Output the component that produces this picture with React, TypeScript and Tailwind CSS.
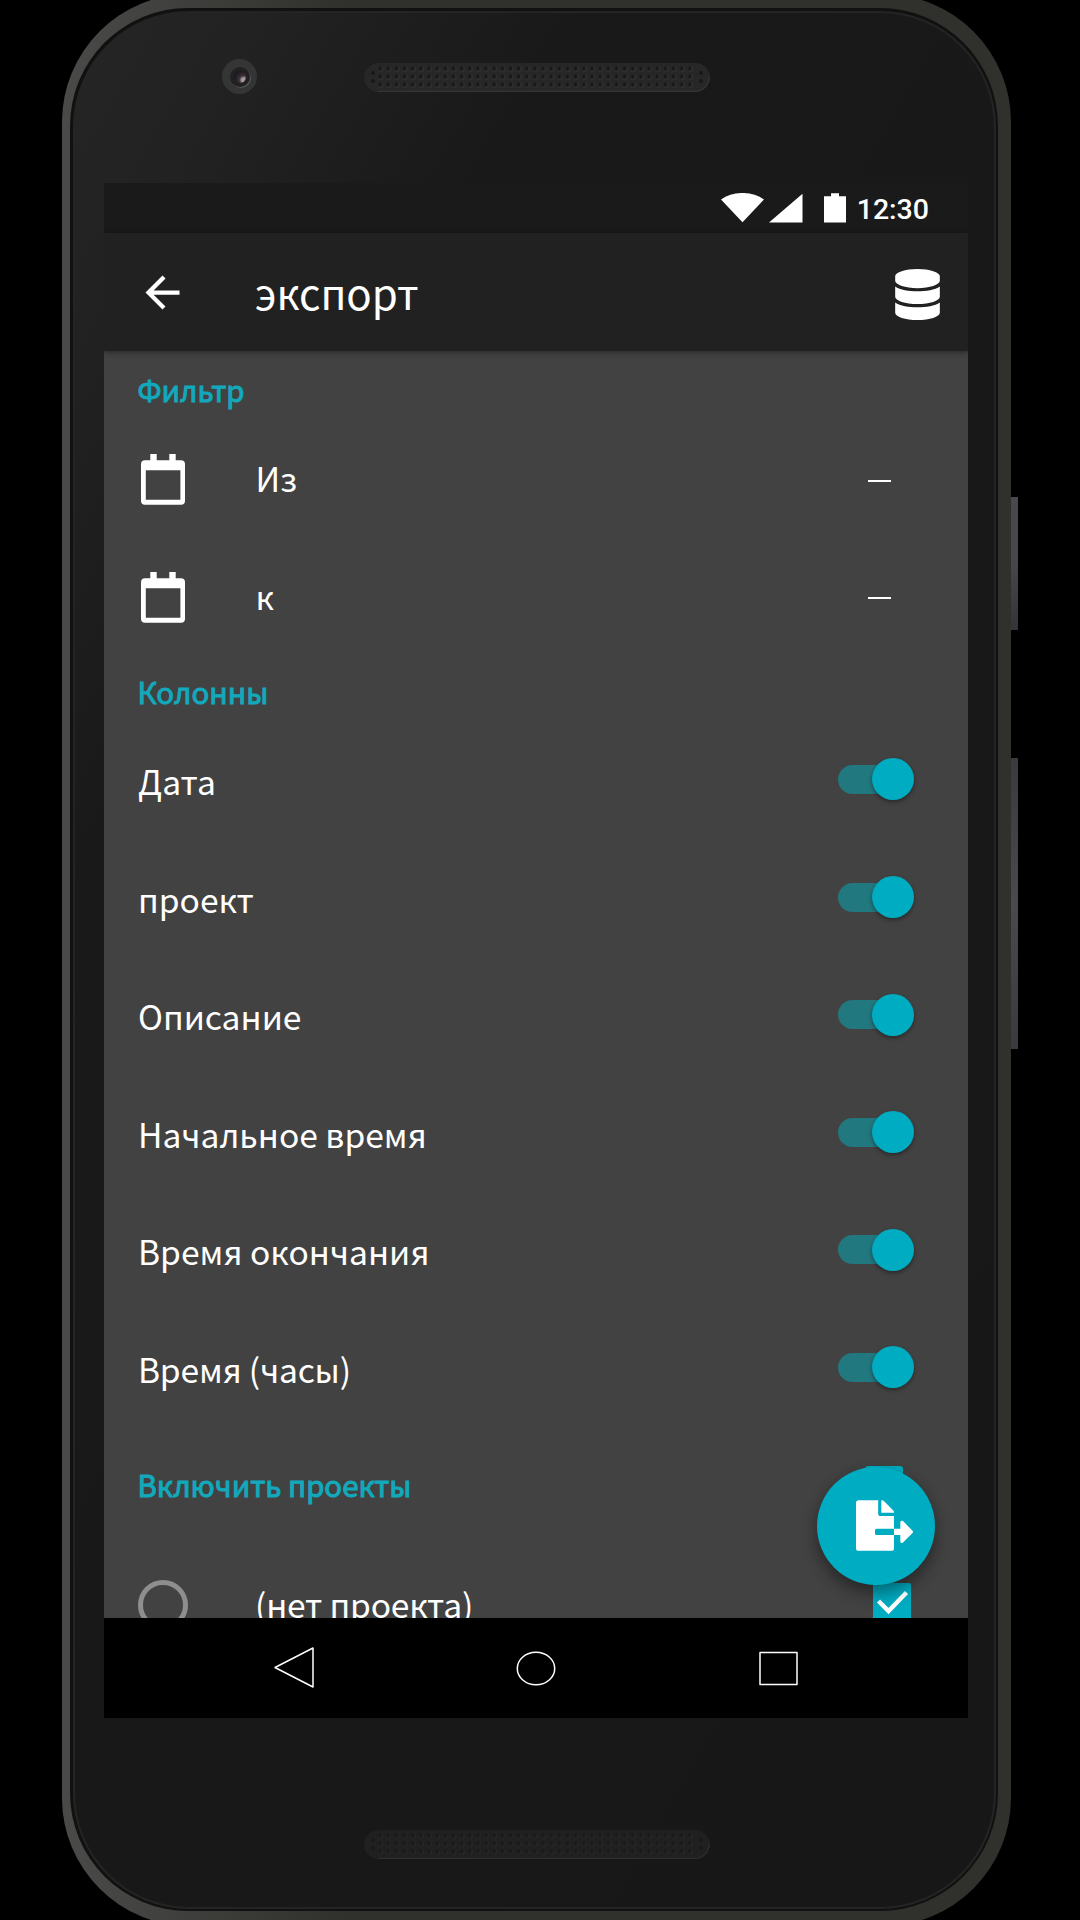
import React from 'react';
import { FaDatabase, FaFileExport } from 'react-icons/fa';

const columns = ['Дата', 'проект', 'Описание', 'Начальное время', 'Время окончания', 'Время (часы)'];

function Speaker({ dim = false }: { dim?: boolean }) {
  const id = dim ? 'grille-bottom' : 'grille-top';
  return (
    <svg width="348" height="31" viewBox="0 0 348 31" className="block">
      <defs>
        <pattern id={id} x="13" y="2.5" width="8.15" height="8" patternUnits="userSpaceOnUse">
          <circle cx="4.6" cy="4.6" r="2.7" fill={dim ? '#262626' : '#303030'} />
          <circle cx="4" cy="4" r="1.9" fill={dim ? '#191919' : '#171717'} />
        </pattern>
      </defs>
      <rect x="1" y="1" width="346" height="29" rx="14.5" fill={dim ? '#202020' : '#272727'} />
      <path d="M15 29.4H332A14 14 0 0 0 346 15" fill="none" stroke={dim ? '#2e2e2e' : '#353535'} strokeWidth="1.2" />
      <rect x="13" y="2.5" width="318" height="24" fill={`url(#${id})`} />
      {[10, 338].map((x) => (
        <g key={x} fill={dim ? '#191919' : '#171717'}>
          <circle cx={x} cy="11" r="1.9" />
          <circle cx={x} cy="19" r="1.9" />
        </g>
      ))}
    </svg>
  );
}

function Camera() {
  return (
    <div className="flex size-[35px] items-center justify-center rounded-full bg-[#343635]">
      <div className="flex size-[20px] items-center justify-center rounded-full bg-[#232024] shadow-[1px_1px_0_#555]">
        <div className="size-[12px] rounded-full bg-[radial-gradient(circle_at_80%_75%,#a99ca0_0_14%,#3a3036_34%,#1d1b20_70%)]" />
      </div>
    </div>
  );
}

function CalendarIcon() {
  return (
    <svg width="44" height="51" viewBox="0 0 44 51" className="block shrink-0">
      <path
        fill="#fff"
        fillRule="evenodd"
        d="M9.3 0h6.4v6.2h12.6V0h6.4v6.2H40a4 4 0 0 1 4 4v36.5a4 4 0 0 1-4 4H4a4 4 0 0 1-4-4V10.2a4 4 0 0 1 4-4h5.3zM4.8 16.2v29.6h34.6V16.2z"
      />
    </svg>
  );
}

function Toggle() {
  return (
    <div className="relative mt-[1px] h-[42px] w-[76px]">
      <div className="mt-[6.5px] h-[29px] w-[62px] rounded-full bg-[#22787f]" />
      <div className="absolute top-0 right-0 size-[42px] rounded-full bg-[#00acc1] shadow-[0_2px_4px_rgba(0,0,0,0.4)]" />
    </div>
  );
}

function Heading({ children }: { children: string }) {
  return <span className="text-[29.4px] text-[#12a9bc] [-webkit-text-stroke:1px_#12a9bc]">{children}</span>;
}

function FilterRow({ label }: { label: string }) {
  return (
    <div className="flex h-[117.6px] shrink-0 items-center pr-[77px] pl-[37px]">
      <CalendarIcon />
      <span className="-mt-[3px] ml-[70.5px] flex-1 text-[33.6px]">{label}</span>
      <span className="mt-[2px] h-[2px] w-[23px] bg-white" />
    </div>
  );
}

export default function App() {
  return (
    <div className="relative flex h-[1920px] w-[1080px] overflow-hidden bg-black font-['Noto_Sans_CJK_SC','Noto_Sans',sans-serif] text-white">
      {/* side buttons */}
      <div className="absolute top-[497px] left-[1009px] h-[133px] w-[9px] bg-[linear-gradient(to_bottom,#4a484c,#48464a_50%,#343336)]" />
      <div className="absolute top-[758px] left-[1009px] h-[291px] w-[9px] bg-[linear-gradient(to_bottom,#3a393c,#4b494d_50%,#3a393c)]" />

      {/* phone body */}
      <div className="relative -mt-[6px] ml-[62px] flex h-[1932px] w-[949px] shrink-0 rounded-[128px] bg-[linear-gradient(to_right,#4a4a48,#30302d_30%,#30312c)] pt-[14px] pr-[13px] pb-[15px] pl-[8px]">
        <div className="flex flex-1 rounded-[118px] bg-[#111] p-[2.5px]">
          <div className="flex flex-1 rounded-[116px] bg-[#242424] p-[2px]">
            <div className="flex flex-1 flex-col rounded-[114px] bg-[linear-gradient(120deg,#252525_0,#222_9%,#191919_25%,#171717)] pt-[46px] pl-[29.5px]">
              <div className="flex h-[124.5px] items-start">
                <div className="mt-[0.5px] ml-[118px]">
                  <Camera />
                </div>
                <div className="mt-[3px] ml-[106px]">
                  <Speaker />
                </div>
              </div>

              {/* screen */}
              <div className="relative flex h-[1535px] w-[864px] shrink-0 flex-col overflow-hidden bg-[#424242]">
                <div className="flex h-[49.5px] shrink-0 items-center bg-[#1a1a1a] pr-[39px]">
                  <svg width="126" height="30" viewBox="0 0 126 30" className="ml-auto" fill="#fff">
                    <path d="M0 6.5C12-2.2 31-2.2 43 6.5L21.5 29.3z" />
                    <path d="M48 29.5L81.5 .8V29.5z" />
                    <path d="M103 3.2h7V.3h8v2.9h7v26.3h-22z" />
                  </svg>
                  <span className="mt-[5px] ml-[10px] font-['Roboto',sans-serif] text-[28.5px] leading-none font-medium">12:30</span>
                </div>

                <div className="relative z-10 flex h-[118.5px] shrink-0 items-center bg-[#212121] pr-[28px] pl-[33px] shadow-[0_1px_6px_rgba(0,0,0,0.45)]">
                  <svg width="51" height="51" viewBox="0 0 24 24" fill="#fff" className="mt-[1px] block">
                    <path d="M20 11H7.83l5.59-5.59L12 4l-8 8 8 8 1.41-1.41L7.83 13H20v-2z" />
                  </svg>
                  <span className="ml-[67px] flex-1 text-[42px] leading-none">экспорт</span>
                  <FaDatabase className="mt-[6px] h-[51px] w-[45px]" />
                </div>

                <div className="flex h-[1267px] shrink-0 flex-col overflow-hidden">
                  <div className="flex h-[70px] shrink-0 items-center pt-[6px] pl-[33.5px]">
                    <Heading>Фильтр</Heading>
                  </div>
                  <FilterRow label="Из" />
                  <FilterRow label="к" />
                  <div className="flex h-[64px] shrink-0 items-center pt-[5px] pl-[33.5px]">
                    <Heading>Колонны</Heading>
                  </div>
                  {columns.map((c) => (
                    <div key={c} className="flex h-[117.6px] shrink-0 items-center justify-between pr-[54.5px] pl-[34px]">
                      <span className={c.includes('(') ? 'mt-[4.5px] text-[33.6px] tracking-[-0.2px]' : 'mt-[4.5px] text-[33.6px]'}>{c}</span>
                      <Toggle />
                    </div>
                  ))}
                  <div className="flex h-[117.6px] shrink-0 items-center justify-between pr-[65px] pl-[33.5px]">
                    <Heading>Включить проекты</Heading>
                    <span className="size-[38px] rounded-[3px] bg-[#00acc1]" />
                  </div>
                  <div className="flex h-[117.6px] shrink-0 items-center pr-[57px] pl-[34px]">
                    <span className="mt-[5px] size-[50px] rounded-full border-[5px] border-[#8e8e8e]" />
                    <span className="mt-[5px] ml-[67px] flex-1 text-[33.6px] tracking-[-0.2px]">(нет проекта)</span>
                    <svg width="38" height="38" viewBox="0 0 38 38">
                      <rect width="38" height="38" rx="2" fill="#00acc1" />
                      <path d="M5.5 18L15.5 28L33.5 9.5" fill="none" stroke="#fff" strokeWidth="4.4" />
                    </svg>
                  </div>
                </div>

                <div className="absolute top-[1283.5px] left-[712.5px] flex size-[118px] items-center justify-center rounded-full bg-[#00acc1] shadow-[0_10px_16px_rgba(0,0,0,0.3),0_2px_12px_rgba(0,0,0,0.15)]">
                  <FaFileExport className="ml-[18px] h-[51px] w-[57px]" />
                </div>

                <div className="relative z-10 flex h-[100px] shrink-0 items-center bg-black pl-[170px]">
                  <svg width="526" height="42" viewBox="0 0 526 42" fill="none" stroke="#fff" strokeWidth="1.5" strokeLinejoin="round" className="block">
                    <path d="M1 20.5L39 1V40z" />
                    <ellipse cx="262" cy="21.5" rx="18.7" ry="16.3" />
                    <rect x="486" y="5.5" width="37" height="32" />
                  </svg>
                </div>
              </div>

              <div className="mt-[111px] ml-[259px]">
                <Speaker dim />
              </div>
            </div>
          </div>
        </div>
      </div>
    </div>
  );
}
